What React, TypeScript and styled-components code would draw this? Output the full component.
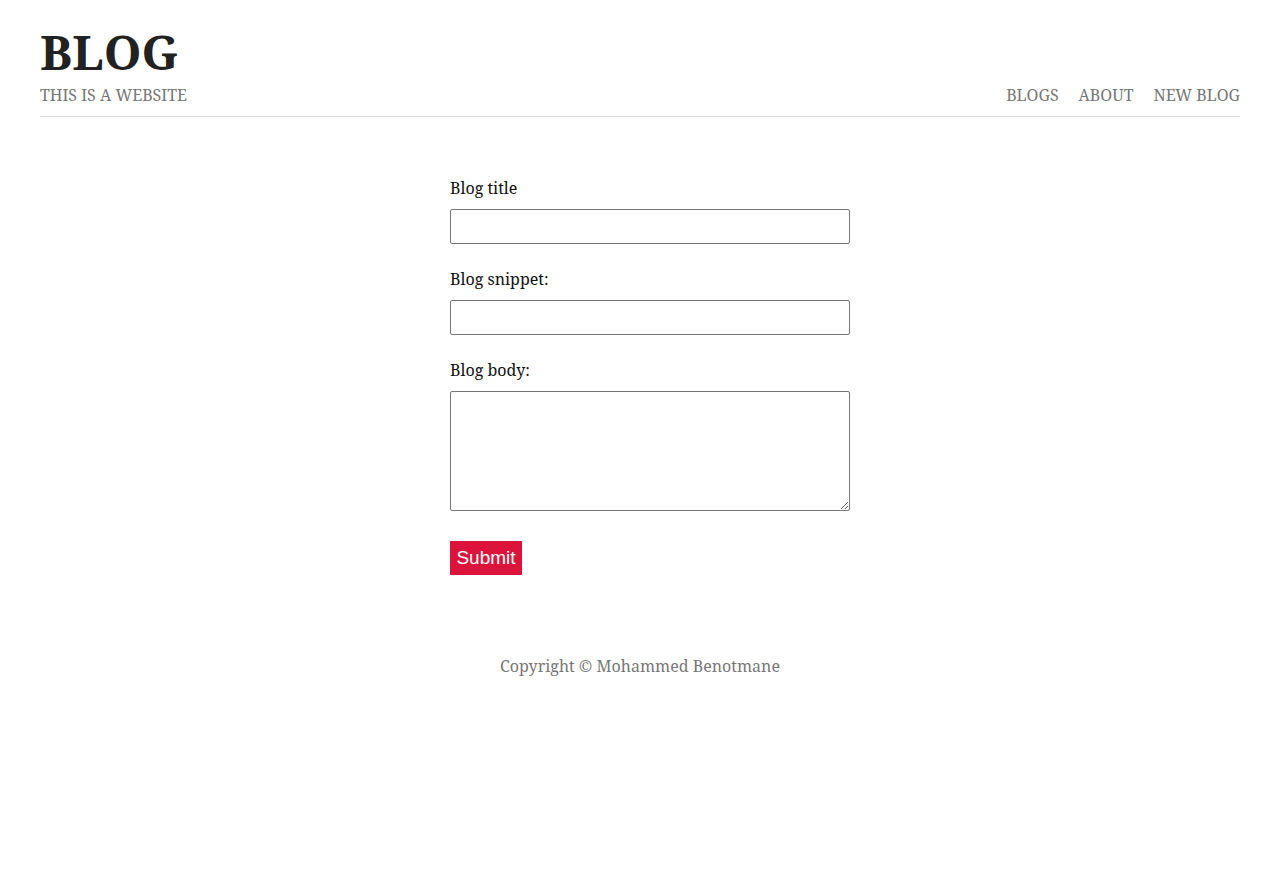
import React from 'react';
import styled, { createGlobalStyle } from 'styled-components';

const GlobalStyle = createGlobalStyle`
  body {
    margin: 0;
    background: #fff;
    font-family: "Noto Serif", "DejaVu Serif", "Liberation Serif", serif;
    color: #222;
  }
  * {
    box-sizing: border-box;
  }
`;

const Page = styled.div`
  padding: 0 40px;
`;

const Header = styled.header`
  display: flex;
  justify-content: space-between;
  align-items: flex-end;
  padding: 26px 0 10px;
  border-bottom: 1px solid #ddd;
`;

const Brand = styled.div`
  display: flex;
  flex-direction: column;
`;

const Title = styled.h1`
  margin: 0 0 5px;
  font-size: 48px;
  font-weight: bold;
  line-height: 1.1;
  color: #222;
`;

const Tagline = styled.p`
  margin: 0;
  font-size: 16px;
  color: #777;
  text-transform: uppercase;
`;

const Nav = styled.nav`
  display: flex;
  gap: 20px;
`;

const NavLink = styled.a`
  font-size: 16px;
  color: #777;
  text-decoration: none;
  text-transform: uppercase;
`;

const CreateForm = styled.form`
  max-width: 420px;
  margin: 60px auto 0;
  padding-left: 20px;
`;

const Label = styled.label`
  display: block;
  font-size: 16px;
  color: #111;
  margin-top: 24px;

  &:first-child {
    margin-top: 0;
  }
`;

const Input = styled.input`
  display: block;
  width: 100%;
  height: 35px;
  margin: 10px 0 0;
  padding: 6px 10px;
  border: 1px solid #767676;
  border-radius: 2px;
  font-family: inherit;
  font-size: 16px;
`;

const TextArea = styled.textarea`
  display: block;
  width: 100%;
  height: 120px;
  margin: 10px 0 0;
  padding: 6px 10px;
  border: 1px solid #767676;
  border-radius: 2px;
  font-family: inherit;
  font-size: 16px;
`;

const SubmitButton = styled.button`
  display: block;
  margin-top: 30px;
  height: 34px;
  width: 72px;
  padding: 0;
  background: #dc143c;
  color: #fff;
  border: none;
  font-family: Arial, "Liberation Sans", sans-serif;
  font-size: 19px;
  cursor: pointer;
`;

const Footer = styled.footer`
  margin-top: 80px;
  text-align: center;
  font-size: 16px;
  color: #777;
`;

const App = () => {
  return (
    <Page>
      <GlobalStyle />
      <Header>
        <Brand>
          <Title>BLOG</Title>
          <Tagline>This is a website</Tagline>
        </Brand>
        <Nav>
          <NavLink href="#">Blogs</NavLink>
          <NavLink href="#">About</NavLink>
          <NavLink href="#">New Blog</NavLink>
        </Nav>
      </Header>
      <CreateForm onSubmit={(e) => e.preventDefault()}>
        <Label>Blog title</Label>
        <Input type="text" />
        <Label>Blog snippet:</Label>
        <Input type="text" />
        <Label>Blog body:</Label>
        <TextArea />
        <SubmitButton type="submit">Submit</SubmitButton>
      </CreateForm>
      <Footer>Copyright © Mohammed Benotmane</Footer>
    </Page>
  );
};

export default App;
